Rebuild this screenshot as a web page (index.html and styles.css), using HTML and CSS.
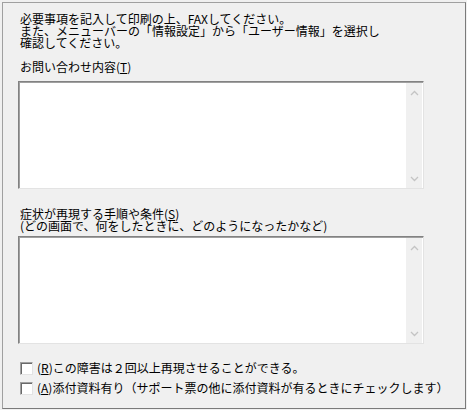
FILE: index.html
```html
<!DOCTYPE html>
<html lang="ja">
<head>
<meta charset="utf-8">
<title>FAX</title>
<link rel="stylesheet" href="styles.css">
</head>
<body>
<div class="frame">
  <div class="intro">
    <div class="line">必要事項を記入して印刷の上、FAXしてください。</div>
    <div class="line">また、メニューバーの「情報設定」から「ユーザー情報」を選択し</div>
    <div class="line">確認してください。</div>
  </div>
  <div class="label label-first">お問い合わせ内容(<u>T</u>)</div>
  <div class="memo">
    <div class="memo-body"></div>
    <div class="vscroll">
      <svg class="arrow" width="9" height="6" viewBox="0 0 9 6"><path d="M1 5 L4.5 1.5 L8 5" fill="none" stroke="#c4c4c4" stroke-width="1.3"/></svg>
      <svg class="arrow" width="9" height="6" viewBox="0 0 9 6"><path d="M1 1 L4.5 4.5 L8 1" fill="none" stroke="#c4c4c4" stroke-width="1.3"/></svg>
    </div>
  </div>
  <div class="label label-second">
    <div class="line">症状が再現する手順や条件(<u>S</u>)</div>
    <div class="line">(どの画面で、何をしたときに、どのようになったかなど)</div>
  </div>
  <div class="memo memo-second">
    <div class="memo-body"></div>
    <div class="vscroll">
      <svg class="arrow" width="9" height="6" viewBox="0 0 9 6"><path d="M1 5 L4.5 1.5 L8 5" fill="none" stroke="#c4c4c4" stroke-width="1.3"/></svg>
      <svg class="arrow" width="9" height="6" viewBox="0 0 9 6"><path d="M1 1 L4.5 4.5 L8 1" fill="none" stroke="#c4c4c4" stroke-width="1.3"/></svg>
    </div>
  </div>
  <div class="checks">
    <div class="check-row"><span class="box"></span><span class="check-text">(<u>R</u>)この障害は２回以上再現させることができる。</span></div>
    <div class="check-row"><span class="box"></span><span class="check-text">(<u>A</u>)添付資料有り（サポート票の他に添付資料が有るときにチェックします）</span></div>
  </div>
</div>
</body>
</html>
```

FILE: styles.css
```css
html, body {
  margin: 0;
  padding: 0;
  background: #f0f0f0;
}
body {
  font-family: "Noto Sans CJK JP", "Noto Sans", sans-serif;
  font-size: 12px;
  line-height: 12px;
  color: #000;
}
.frame {
  margin: 2px;
  box-sizing: border-box;
  width: 464px;
  height: 407px;
  border: 1px solid #a0a0a0;
  border-right-color: #7a7a7a;
  border-bottom-color: #7a7a7a;
  padding: 10px 0 0 15px;
  background: #f0f0f0;
}
.intro, .label {
  padding-left: 2px;
}
.line {
  height: 12px;
  white-space: nowrap;
}
.label-first {
  margin-top: 12px;
  height: 12px;
}
.label-second {
  margin-top: 19px;
}
u {
  text-decoration: underline;
  text-underline-offset: 1px;
}
.memo {
  margin-top: 8px;
  box-sizing: border-box;
  width: 406px;
  height: 108px;
  display: flex;
  border: 1px solid #828282;
  border-right-color: #e3e3e3;
  border-bottom-color: #e3e3e3;
  box-shadow: inset 1px 1px 0 #a0a0a0;
  background: #fff;
}
.memo-second {
  margin-top: 4px;
}
.memo-body {
  flex: 1;
}
.vscroll {
  width: 16px;
  margin: 1px 1px 0 0;
  background: #f0f0f0;
  display: flex;
  flex-direction: column;
  justify-content: space-between;
  align-items: center;
  padding: 7px 0 6px;
}
.arrow {
  display: block;
}
.checks {
  margin-top: 14px;
  padding-left: 2px;
}
.check-row {
  height: 20px;
  display: flex;
  align-items: center;
  white-space: nowrap;
}
.box {
  box-sizing: border-box;
  width: 13px;
  height: 13px;
  background: #fff;
  border: 1px solid #a0a0a0;
  border-right-color: #e3e3e3;
  border-bottom-color: #e3e3e3;
  box-shadow: inset 1px 1px 0 #696969;
  margin-right: 4px;
  flex: none;
}
.check-text {
  line-height: 12px;
}
```
